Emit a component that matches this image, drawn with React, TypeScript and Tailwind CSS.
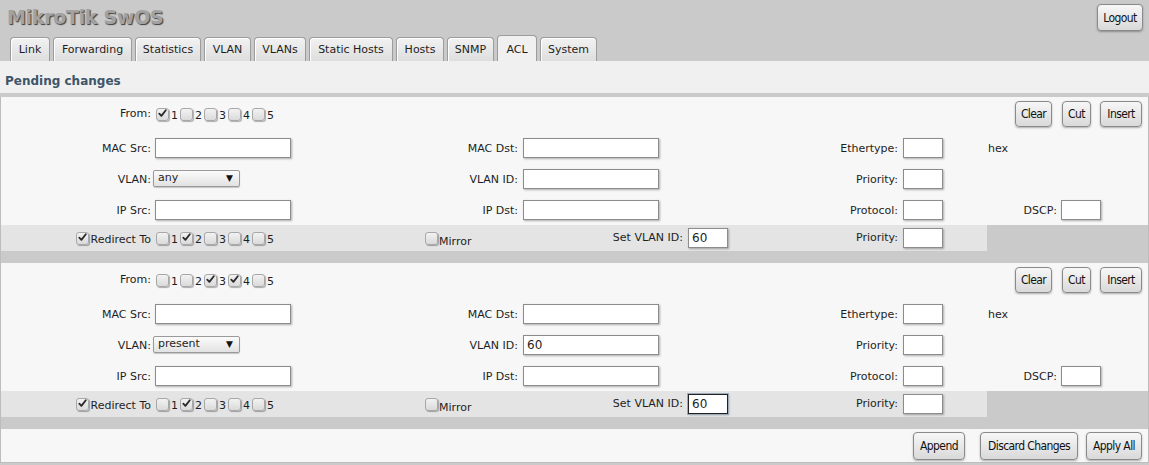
import React from "react";

const tabs = [
  { label: "Link", w: "w-[40px]" },
  { label: "Forwarding", w: "w-[79px]" },
  { label: "Statistics", w: "w-[66px]" },
  { label: "VLAN", w: "w-[47px]" },
  { label: "VLANs", w: "w-[52px]" },
  { label: "Static Hosts", w: "w-[84px]" },
  { label: "Hosts", w: "w-[48px]" },
  { label: "SNMP", w: "w-[47px]" },
  { label: "ACL", w: "w-[40px]", active: true },
  { label: "System", w: "w-[57px]" },
];

function Check({ checked }: { checked?: boolean }) {
  return (
    <span className="relative inline-block w-[13px] h-[13px] shrink-0 rounded-[3px] border border-[#a8a8a8] bg-gradient-to-b from-[#f2f2f2] to-[#dadada] shadow-[1px_1px_1px_rgba(0,0,0,0.3)]">
      {checked && (
        <svg viewBox="0 0 12 12" className="absolute left-[0px] top-[-1px] w-[11px] h-[11px]">
          <path d="M2.5 6.2 L4.8 8.6 L9.6 2.4" fill="none" stroke="#2a2a2a" strokeWidth="2" strokeLinecap="round" strokeLinejoin="round" />
        </svg>
      )}
    </span>
  );
}

function Ports({ on }: { on: number[] }) {
  return (
    <div className="flex items-end">
      {[1, 2, 3, 4, 5].map((n) => (
        <div key={n} className="flex items-end">
          <Check checked={on.includes(n)} />
          <span className="ml-[2px] mr-[2px] leading-[12px] translate-y-[1px]">{n}</span>
        </div>
      ))}
    </div>
  );
}

function Input({ w, value, focus }: { w: string; value?: string; focus?: boolean }) {
  return (
    <div
      className={
        "h-[20px] bg-white flex items-center px-[3px] text-[12px] " +
        w +
        (focus
          ? " border border-[#222] shadow-[0_0_0_1px_#9ab,1px_1px_2px_rgba(0,0,0,0.3)]"
          : " border border-[#8c8c8c] shadow-[1px_1px_2px_rgba(0,0,0,0.3)]")
      }
    >
      {value}
    </div>
  );
}

function Btn({ children, w, h = "h-[26px]" }: { children: React.ReactNode; w: string; h?: string }) {
  return (
    <button
      className={
        "flex items-center justify-center rounded-[4px] border border-[#8a8a8a] bg-gradient-to-b from-[#f7f7f7] to-[#d9d9d9] shadow-[0_1px_2px_rgba(0,0,0,0.3)] font-['DejaVu_Sans_Condensed',sans-serif] text-[12px] tracking-[-0.6px] text-[#111] " +
        w +
        " " +
        h
      }
    >
      {children}
    </button>
  );
}

function Select({ value }: { value: string }) {
  return (
    <div className="w-[87px] h-[17px] flex items-center justify-between pl-[4px] pr-[6px] rounded-[2px] border border-[#9a9a9a] bg-gradient-to-b from-[#fbfbfb] to-[#e2e2e2] shadow-[0_1px_1px_rgba(0,0,0,0.2)]">
      <span>{value}</span>
      <span className="text-[9px] text-[#111]">▼</span>
    </div>
  );
}

const cols = "grid grid-cols-[152px_147px_221px_159px_221px_86px_72px_89px] h-[31px] items-center";

function Label({ children, pr = "pr-[3px]" }: { children: React.ReactNode; pr?: string }) {
  return <div className={"text-right pt-[3px] " + pr}>{children}</div>;
}

function Rule({ from, vlan, vlanId, focus }: { from: number[]; vlan: string; vlanId?: string; focus?: boolean }) {
  return (
    <div className="bg-[#f7f7f7]">
      {/* From + actions */}
      <div className="flex h-[35px]">
        <div className="w-[152px] flex justify-end items-end pr-[2px] pb-[10px]">From:</div>
        <div className="pl-[3px] pb-[11px] flex items-end">
          <Ports on={from} />
        </div>
        <div className="flex-1" />
        <div className="flex gap-[9px] pt-[4px] pr-[6px]">
          <Btn w="w-[37px] mr-[1px]">Clear</Btn>
          <Btn w="w-[29px]">Cut</Btn>
          <Btn w="w-[42px]">Insert</Btn>
        </div>
      </div>

      <div className={cols}>
        <Label pr="pr-[2px]">MAC Src:</Label>
        <div className="pl-[2px]"><Input w="w-[136px]" /></div>
        <Label>MAC Dst:</Label>
        <div className="pl-[2px]"><Input w="w-[136px]" /></div>
        <Label>Ethertype:</Label>
        <div className="pl-[2px]"><Input w="w-[40px]" /></div>
        <div className="pl-[1px] pt-[3px]">hex</div>
        <div />
      </div>

      <div className={cols}>
        <Label pr="pr-[2px]">VLAN:</Label>
        <div><Select value={vlan} /></div>
        <Label>VLAN ID:</Label>
        <div className="pl-[2px]"><Input w="w-[136px]" value={vlanId} /></div>
        <Label>Priority:</Label>
        <div className="pl-[2px]"><Input w="w-[40px]" /></div>
        <div />
        <div />
      </div>

      <div className={cols}>
        <Label pr="pr-[2px]">IP Src:</Label>
        <div className="pl-[2px]"><Input w="w-[136px]" /></div>
        <Label>IP Dst:</Label>
        <div className="pl-[2px]"><Input w="w-[136px]" /></div>
        <Label>Protocol:</Label>
        <div className="pl-[2px]"><Input w="w-[40px]" /></div>
        <Label pr="pr-[2px]">DSCP:</Label>
        <div className="pl-[2px]"><Input w="w-[40px]" /></div>
      </div>

      {/* Redirect row */}
      <div className="flex bg-[#cacaca]">
        <div className="flex w-[986px] h-[26px] items-center bg-[#e4e4e4]">
          <div className="w-[152px] flex justify-end items-end pr-[2px]">
            <Check checked />
            <span className="ml-[2px] leading-[12px] translate-y-[1px]">Redirect To</span>
          </div>
          <div className="w-[267px] pl-[3px] flex">
            <Ports on={[2]} />
          </div>
          <div className="w-[180px] pl-[5px] flex items-end">
            <Check />
            <span className="ml-[1px] leading-[12px] translate-y-[3px]">Mirror</span>
          </div>
          <div className="w-[86px] text-right pr-[3px] pt-[1px]">Set VLAN ID:</div>
          <div className="w-[114px] pl-[2px]"><Input w="w-[40px]" value="60" focus={focus} /></div>
          <div className="w-[101px] text-right pr-[3px] pt-[1px]">Priority:</div>
          <div className="w-[86px] pl-[2px]"><Input w="w-[40px]" /></div>
        </div>
      </div>
    </div>
  );
}

export default function App() {
  return (
    <div className="w-[1149px] h-[465px] bg-[#cacaca] font-['DejaVu_Sans',sans-serif] text-[11px] text-[#1e1e1e] overflow-hidden">
      {/* Header */}
      <div className="flex justify-between h-[35px]">
        <div className="pl-[7px] pt-[3px] font-bold text-[19px] tracking-[-0.3px] text-[#a2a2a2] [text-shadow:1px_1px_1px_#3c3c3c]">
          MikroTik SwOS
        </div>
        <div className="pt-[4px] pr-[6px]">
          <Btn w="w-[46px]" h="h-[27px]">Logout</Btn>
        </div>
      </div>

      {/* Tabs */}
      <div className="flex items-end gap-[3px] pl-[10px] h-[26px]">
        {tabs.map((t) => (
          <div
            key={t.label}
            className={
              "flex justify-center rounded-t-[4px] border border-b-0 border-[#9c9c9c] " +
              t.w +
              (t.active
                ? " h-[26px] pt-[6px] bg-[#f0f0f0]"
                : " h-[24px] pt-[4px] bg-gradient-to-b from-[#f2f2f2] to-[#dedede] shadow-[inset_1px_1px_0_#fff]")
            }
          >
            {t.label}
          </div>
        ))}
      </div>

      {/* Pending changes */}
      <div className="bg-[#f0f0f0] h-[32px] pl-[5px] pt-[11px] font-bold text-[12px] text-[#3d5568]">
        Pending changes
      </div>

      <div className="h-[4px]" />

      <div className="border-x border-[#bdbdbd]">
        <Rule from={[1]} vlan="any" />
        <div className="h-[12px] bg-[#cacaca]" />
        <Rule from={[3, 4]} vlan="present" vlanId="60" focus />
        <div className="h-[12px] bg-[#cacaca]" />
        <div className="h-[34px] bg-[#f7f7f7] border-b border-[#bdbdbd] flex justify-end items-start pt-[3px] pr-[6px]">
          <Btn w="w-[52px]" h="h-[28px]">Append</Btn>
          <div className="w-[15px]" />
          <Btn w="w-[98px]" h="h-[28px]">Discard Changes</Btn>
          <div className="w-[8px]" />
          <Btn w="w-[56px]" h="h-[28px]">Apply All</Btn>
        </div>
      </div>
    </div>
  );
}
